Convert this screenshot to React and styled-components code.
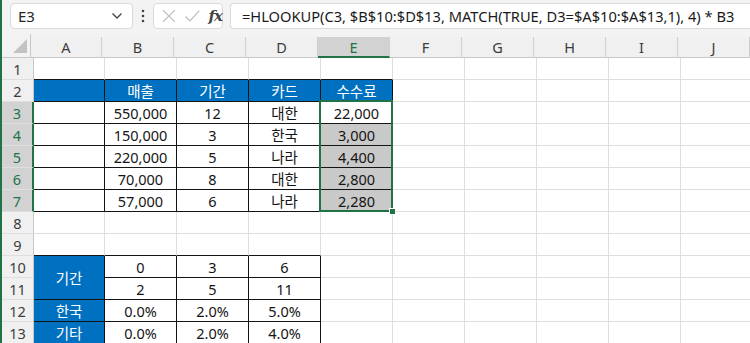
import React from 'react';
import styled, { createGlobalStyle } from 'styled-components';

const GlobalStyle = createGlobalStyle`
  html, body { margin: 0; padding: 0; background: #ffffff; }
  * { box-sizing: border-box; }
`;

const GREEN = '#217346';
const BLUE = '#0070c0';
const GRID = '#dedede';
const INK = '#141414';

const Page = styled.div`
  width: 750px;
  height: 343px;
  overflow: hidden;
  border-left: 2px solid ${GREEN};
  background: #ffffff;
  font-family: "Noto Sans", "Noto Sans CJK KR", sans-serif;
`;

const Toolbar = styled.div`
  height: 34px;
  display: flex;
  align-items: flex-start;
  padding: 3px 0 0 8px;
  background: #f3f3f3;
`;

const NameBox = styled.div`
  width: 123px;
  height: 26px;
  background: #ffffff;
  border: 1px solid #dadada;
  border-radius: 4px;
  display: flex;
  align-items: center;
  justify-content: space-between;
  padding: 0 9px 0 7px;
  font-size: 15px;
  color: #262626;
`;

const Grip = styled.div`
  width: 20px;
  height: 26px;
  display: flex;
  align-items: center;
  justify-content: center;
`;

const FuncBox = styled.div`
  width: 70px;
  height: 26px;
  background: #ffffff;
  border: 1px solid #dadada;
  border-radius: 4px;
  display: flex;
  align-items: center;
  gap: 7px;
  padding-left: 7px;
`;

const Fx = styled.span`
  font-family: "DejaVu Serif", "Liberation Serif", serif;
  font-style: italic;
  font-weight: bold;
  font-size: 15px;
  color: #444444;
  letter-spacing: -1px;
  margin-left: 1px;
`;

const FormulaBox = styled.div`
  flex: 1;
  height: 26px;
  margin-left: 7px;
  background: #ffffff;
  border: 1px solid #dadada;
  border-right: none;
  border-radius: 4px 0 0 4px;
  display: flex;
  align-items: center;
  padding-left: 11px;
  font-size: 14.65px;
  color: #1a1a1a;
  white-space: nowrap;
  overflow: hidden;
`;

const HeaderRow = styled.div`
  height: 24px;
  display: flex;
  align-items: flex-end;
  background: #f3f3f3;
`;

const Corner = styled.div`
  width: 32px;
  height: 24px;
  border-right: 1px solid #c8c8c8;
  border-bottom: 1px solid #c8c8c8;
  display: flex;
  align-items: flex-end;
  justify-content: flex-end;
  padding: 0 2px 3px 0;
`;

const ColHead = styled.div`
  width: ${p => p.$w}px;
  height: 21px;
  flex: none;
  display: flex;
  align-items: center;
  justify-content: center;
  font-size: 14.5px;
  background: ${p => (p.$sel ? '#d2d2d2' : '#f0f0f0')};
  color: ${p => (p.$sel ? GREEN : '#3c3c3c')};
  border-right: 1px solid #d0d0d0;
  border-bottom: ${p => (p.$sel ? `2px solid ${GREEN}` : '1px solid #c8c8c8')};
`;

const Sheet = styled.div`
  display: grid;
  grid-template-columns: 32px 71px repeat(9, 72px);
  grid-auto-rows: 22px;
`;

const RowHead = styled.div`
  grid-column: 1;
  grid-row: ${p => p.$row};
  display: flex;
  align-items: center;
  justify-content: center;
  font-size: 14.5px;
  background: ${p => (p.$sel ? '#d2d2d2' : '#f0f0f0')};
  color: ${p => (p.$sel ? GREEN : '#3c3c3c')};
  border-right: ${p => (p.$sel ? `2px solid ${GREEN}` : '1px solid #c8c8c8')};
  border-bottom: 1px solid ${GRID};
`;

const Cell = styled.div`
  position: relative;
  z-index: ${p => (p.$top ? 2 : 'auto')};
  grid-column: ${p => p.$col} / span 1;
  grid-row: ${p => p.$row} / span ${p => p.$span || 1};
  display: flex;
  align-items: center;
  justify-content: center;
  font-size: 14.5px;
  color: ${p => (p.$head ? '#ffffff' : INK)};
  background: ${p => p.$bg || '#ffffff'};
  border-right: 1px solid ${p => p.$br || GRID};
  border-bottom: 1px solid ${p => p.$bb || GRID};
`;

const SelectionFrame = styled.div`
  position: absolute;
  left: -2px;
  top: -2px;
  width: 74px;
  height: 112px;
  border: 2px solid ${GREEN};
  pointer-events: none;
`;

const FillHandle = styled.div`
  position: absolute;
  right: -5px;
  bottom: -5px;
  width: 7px;
  height: 7px;
  background: ${GREEN};
  border: 1px solid #ffffff;
`;

const columns = ['A', 'B', 'C', 'D', 'E', 'F', 'G', 'H', 'I', 'J'];

const values = {
  2: ['', '매출', '기간', '카드', '수수료'],
  3: ['', '550,000', '12', '대한', '22,000'],
  4: ['', '150,000', '3', '한국', '3,000'],
  5: ['', '220,000', '5', '나라', '4,400'],
  6: ['', '70,000', '8', '대한', '2,800'],
  7: ['', '57,000', '6', '나라', '2,280'],
  10: ['기간', '0', '3', '6'],
  11: [null, '2', '5', '11'],
  12: ['한국', '0.0%', '2.0%', '5.0%'],
  13: ['기타', '0.0%', '2.0%', '4.0%'],
};

function cellStyle(row, col) {
  // col: 0 = A ... 9 = J
  const s = {};
  const upper = row >= 2 && row <= 7 && col <= 4;
  const lower = row >= 10 && row <= 13 && col <= 3;
  if (row === 1 && col <= 4) s.bb = INK;
  if (row === 9 && col <= 3) s.bb = INK;
  if (upper || lower) {
    s.br = INK;
    s.bb = INK;
  }
  if (row === 2 && col <= 4) {
    s.bg = BLUE;
    s.head = true;
  }
  if (lower && col === 0) {
    s.bg = BLUE;
    s.head = true;
  }
  if (row >= 4 && row <= 7 && col === 4) s.bg = '#c9c9c9';
  return s;
}

function ChevronDown() {
  return (
    <svg width="12" height="8" viewBox="0 0 12 8">
      <polyline points="1.5,1.5 6,6 10.5,1.5" fill="none" stroke="#444" strokeWidth="1.3" />
    </svg>
  );
}

function Dots() {
  return (
    <svg width="4" height="14" viewBox="0 0 4 14">
      <circle cx="2" cy="2" r="1.3" fill="#444" />
      <circle cx="2" cy="7" r="1.3" fill="#444" />
      <circle cx="2" cy="12" r="1.3" fill="#444" />
    </svg>
  );
}

function CrossIcon() {
  return (
    <svg width="16" height="16" viewBox="0 0 16 16">
      <path d="M2 2 L14 14 M14 2 L2 14" stroke="#bcbcbc" strokeWidth="1.2" fill="none" />
    </svg>
  );
}

function CheckIcon() {
  return (
    <svg width="17" height="16" viewBox="0 0 17 16">
      <path d="M1.5 8.5 L6 13 L15.5 2.5" stroke="#bcbcbc" strokeWidth="1.2" fill="none" />
    </svg>
  );
}

function SelectAll() {
  return (
    <svg width="16" height="16" viewBox="0 0 16 16">
      <polygon points="15,1 15,15 1,15" fill="#c3c3c3" />
    </svg>
  );
}

export default function App() {
  const rows = Array.from({ length: 13 }, (_, i) => i + 1);
  const cells = [];
  rows.forEach(row => {
    columns.forEach((_, col) => {
      if (row === 11 && col === 0) return;
      const s = cellStyle(row, col);
      const text = values[row] && values[row][col] != null ? values[row][col] : '';
      const active = row === 3 && col === 4;
      cells.push(
        <Cell
          key={`${row}-${col}`}
          $row={row}
          $col={col + 2}
          $span={row === 10 && col === 0 ? 2 : 1}
          $bg={s.bg}
          $br={s.br}
          $bb={s.bb}
          $head={s.head}
          $top={active}
        >
          {text}
          {active && (
            <SelectionFrame>
              <FillHandle />
            </SelectionFrame>
          )}
        </Cell>
      );
    });
  });

  return (
    <Page>
      <GlobalStyle />
      <Toolbar>
        <NameBox>
          <span>E3</span>
          <ChevronDown />
        </NameBox>
        <Grip><Dots /></Grip>
        <FuncBox>
          <CrossIcon />
          <CheckIcon />
          <Fx>fx</Fx>
        </FuncBox>
        <FormulaBox>=HLOOKUP(C3, $B$10:$D$13, MATCH(TRUE, D3=$A$10:$A$13,1), 4) * B3</FormulaBox>
      </Toolbar>
      <HeaderRow>
        <Corner><SelectAll /></Corner>
        {columns.map((c, i) => (
          <ColHead key={c} $w={i === 0 ? 71 : 72} $sel={c === 'E'}>{c}</ColHead>
        ))}
      </HeaderRow>
      <Sheet>
        {rows.map(r => (
          <RowHead key={r} $row={r} $sel={r >= 3 && r <= 7}>{r}</RowHead>
        ))}
        {cells}
      </Sheet>
    </Page>
  );
}
